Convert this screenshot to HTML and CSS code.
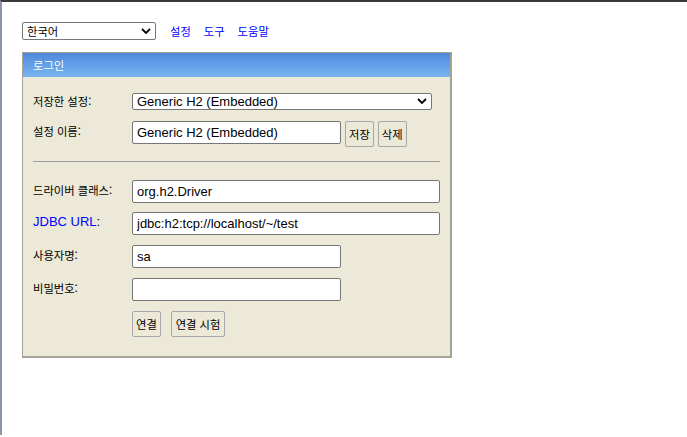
FILE: index.html
```html
<!DOCTYPE html>
<html lang="ko">
<head>
<meta charset="utf-8">
<title>H2 Console</title>
<link rel="stylesheet" href="styles.css">
</head>
<body>
<div class="frame">
  <div class="topbar">
    <div class="selwrap lang">
      <select class="sel ko"><option>한국어</option></select>
      <svg class="chev" viewBox="0 0 10 6" width="10" height="6"><path d="M1 1 L5 5 L9 1" fill="none" stroke="#000" stroke-width="1.8"/></svg>
    </div>
    <a class="link ko" href="#">설정</a>
    <a class="link ko" href="#">도구</a>
    <a class="link ko" href="#">도움말</a>
  </div>

  <div class="panel">
    <div class="phead ko">로그인</div>
    <div class="pbody">
      <div class="row row-sel">
        <span class="lbl ko">저장한 설정:</span>
        <div class="selwrap saved">
          <select class="sel"><option>Generic H2 (Embedded)</option></select>
          <svg class="chev" viewBox="0 0 10 6" width="10" height="6"><path d="M1 1 L5 5 L9 1" fill="none" stroke="#000" stroke-width="1.8"/></svg>
        </div>
      </div>
      <div class="row row-name">
        <span class="lbl ko">설정 이름:</span>
        <input class="inp short" type="text" value="Generic H2 (Embedded)">
        <button class="btn ko">저장</button>
        <button class="btn ko">삭제</button>
      </div>
      <div class="rule"></div>
      <div class="row row-first">
        <span class="lbl ko">드라이버 클래스:</span>
        <input class="inp long" type="text" value="org.h2.Driver">
      </div>
      <div class="row">
        <span class="lbl lat"><span class="blue">JDBC URL</span>:</span>
        <input class="inp long" type="text" value="jdbc:h2:tcp://localhost/~/test">
      </div>
      <div class="row">
        <span class="lbl ko">사용자명:</span>
        <input class="inp short" type="text" value="sa">
      </div>
      <div class="row">
        <span class="lbl ko">비밀번호:</span>
        <input class="inp short" type="password" value="">
      </div>
      <div class="row row-btns">
        <span class="lbl"></span>
        <button class="btn ko">연결</button>
        <button class="btn ko wide">연결 시험</button>
      </div>
    </div>
  </div>
</div>
</body>
</html>
```

FILE: styles.css
```css
html, body {
  margin: 0;
  padding: 0;
  background: #ffffff;
}
body {
  font-family: "Liberation Sans", "Noto Sans CJK KR", sans-serif;
  font-size: 13px;
  color: #000;
}
.frame {
  min-height: 435px;
  box-sizing: border-box;
  border-top: 2px solid #3a3a3a;
  border-left: 2px solid #8c93ac;
  padding: 20px 0 0 20px;
}
.ko {
  font-family: "Noto Sans CJK KR", sans-serif;
  font-size: 11.3px;
}
.lat {
  font-family: "Liberation Sans", sans-serif;
  font-size: 13px;
}

/* top bar */
.topbar {
  display: flex;
  align-items: center;
  height: 18px;
}
.link {
  color: #0000ff;
  text-decoration: none;
  margin-left: 13px;
}
.lang + .link { margin-left: 14px; }

/* select */
.selwrap {
  position: relative;
  display: inline-block;
}
.sel {
  -webkit-appearance: none;
  appearance: none;
  display: block;
  box-sizing: border-box;
  background: #fff;
  border: 1px solid #767676;
  border-radius: 2px;
  margin: 0;
  padding: 0 0 0 4px;
  color: #000;
}
.lang .sel { width: 134px; height: 18px; line-height: 16px; }
.saved .sel {
  width: 300px;
  height: 17px;
  line-height: 15px;
  font-family: "Liberation Sans", sans-serif;
  font-size: 13px;
}
.chev {
  position: absolute;
  right: 5px;
  top: 6px;
}
.saved .chev { top: 5px; }

/* panel */
.panel {
  width: 427px;
  border: 1px solid #a5a293;
  border-right-width: 2px;
  border-bottom-width: 2px;
  margin-top: 12px;
  background: #ece9d8;
}
.phead {
  height: 24px;
  line-height: 24px;
  padding-left: 10px;
  color: #fff;
  background: linear-gradient(#5089db, #79b5f3);
}
.pbody {
  padding: 16px 10px 19px 10px;
}
.row {
  display: flex;
  align-items: flex-start;
  margin-bottom: 10px;
}
.lbl {
  width: 99px;
  flex: none;
  padding-top: 2px;
  line-height: 16px;
}
.row-sel { margin-bottom: 11px; }
.row-sel .lbl { padding-top: 0; }
.row-name { margin-bottom: 0; }
.row-first { margin-bottom: 9px; }
.row-btns { margin-bottom: 0; }
.blue { color: #0000ff; }

.inp {
  box-sizing: border-box;
  height: 23px;
  margin: 0;
  padding: 0 4px;
  border: 1px solid #767676;
  border-radius: 2px;
  background: #fff;
  font-family: "Liberation Sans", sans-serif;
  font-size: 13px;
  color: #000;
}
.inp.short { width: 209px; }
.inp.long { width: 309px; }

.btn {
  box-sizing: border-box;
  height: 26px;
  margin: 0 0 0 4px;
  padding: 0 3px;
  border: 1px solid #a7a7a7;
  border-radius: 2px;
  background: #ece9d8;
  color: #000;
}
.row-btns .btn { margin-left: 0; margin-right: 10px; width: 29px; padding: 0; }
.row-btns .btn.wide { width: 54px; }
.rule {
  height: 0;
  border-top: 1px solid #a0a0a0;
  margin: 14px 0 18px 0;
}
```
